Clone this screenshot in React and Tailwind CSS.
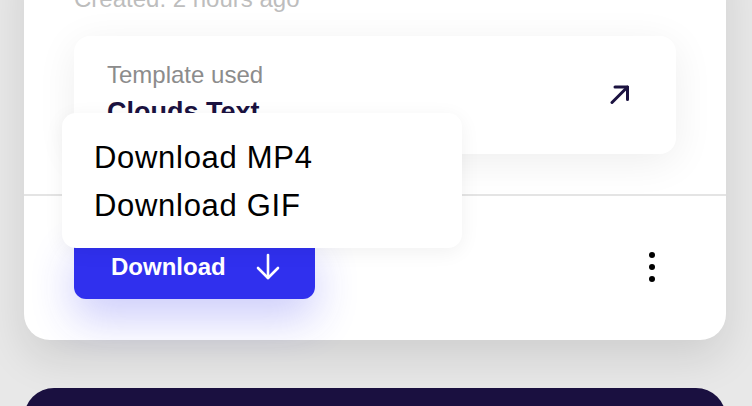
export default function App() {
  return (
    <div className="relative h-[406px] w-[752px] overflow-hidden bg-[#e8e8e8] px-6 font-['Liberation_Sans',Arial,sans-serif]">
      <div className="-mt-[55px] w-[702px] rounded-[26px] bg-white shadow-[0_18px_44px_rgba(0,0,0,0.11)]">
        <div className="px-[50px] pb-10 pt-[40px]">
          <p className="text-[24px] leading-[28px] text-[#bdbdbd]">Created: 2 hours ago</p>
          <div className="mt-[23px] flex items-center justify-between rounded-2xl bg-white pb-[26px] pl-[33px] pr-[46px] pt-[25px] shadow-[0_8px_40px_rgba(0,0,0,0.07)]">
            <div>
              <p className="text-[24px] leading-[28px] text-[#8c8c8c]">Template used</p>
              <p className="mt-[7px] text-[27px] font-bold leading-[32px] text-[#1b1240]">Clouds Text</p>
            </div>
            <svg width="20" height="19" viewBox="0 0 20 19" fill="none" stroke="#1b1240" strokeWidth="3" strokeLinecap="round" strokeLinejoin="round">
              <path d="M2 17.5 L17.5 2" />
              <path d="M5 2 H17.5 V14.5" />
            </svg>
          </div>
        </div>
        <div className="flex items-center justify-between border-t-2 border-[#e4e4e4] pb-[41px] pl-[50px] pr-[71px] pt-[39px]">
          <button className="flex h-[64px] w-[241px] items-center rounded-xl bg-[#3030ee] pl-[37px] text-[24px] font-bold text-white shadow-[0_20px_44px_rgba(48,48,238,0.24)]">
            <span>Download</span>
            <svg className="ml-[30px]" width="24" height="28" viewBox="0 0 24 28" fill="none" stroke="white" strokeWidth="2.6" strokeLinecap="round" strokeLinejoin="round">
              <path d="M12 2 V25" />
              <path d="M2 15 L12 25 L22 15" />
            </svg>
          </button>
          <div className="flex flex-col items-center gap-[6px]">
            <span className="h-[6px] w-[6px] rounded-full bg-black" />
            <span className="h-[6px] w-[6px] rounded-full bg-black" />
            <span className="h-[6px] w-[6px] rounded-full bg-black" />
          </div>
        </div>
      </div>
      <div className="mt-12 h-40 w-[702px] rounded-[30px] bg-[#1a1040]" />
      <div className="absolute left-[62px] top-[113px] w-[400px] rounded-[14px] bg-white px-8 pb-[18px] pt-[21px] shadow-[0_4px_20px_rgba(0,0,0,0.06)]">
        <p className="text-[31px] leading-[48px] tracking-[0.7px] text-black">Download MP4</p>
        <p className="text-[31px] leading-[48px] tracking-[0.7px] text-black">Download GIF</p>
      </div>
    </div>
  );
}
